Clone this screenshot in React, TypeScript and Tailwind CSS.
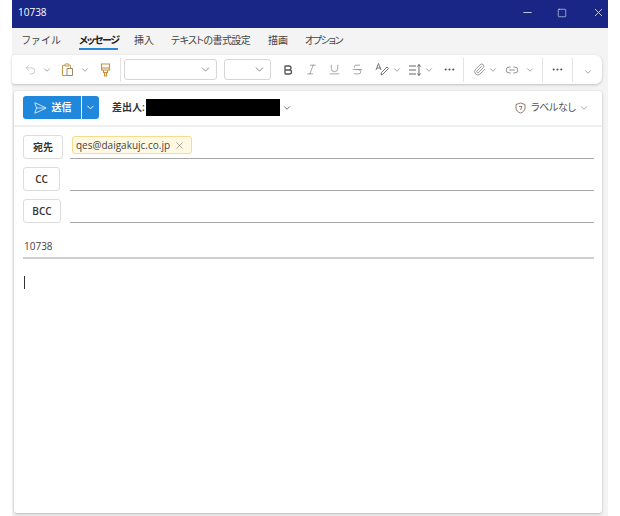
import React from "react";
import { X, Minus, Square, ChevronDown, Undo2, Bold, Italic, Underline, Strikethrough, Paperclip, Link2, SendHorizontal, MoreHorizontal } from "lucide-react";

const FONT = '"Open Sans", "Noto Sans CJK JP", sans-serif';

function Chev({ className = "" }: { className?: string }) {
  return <ChevronDown size={10} strokeWidth={1.5} className={`shrink-0 text-[#707070] ${className}`} />;
}

function Sep({ className = "" }: { className?: string }) {
  return <div className={`h-[24px] w-px shrink-0 bg-[#e3e3e3] ${className}`} />;
}

function Dropdown({ className }: { className: string }) {
  return (
    <div className={`flex h-[21px] shrink-0 items-center justify-end rounded-[3px] border border-[#d6d6d6] bg-white pr-[4px] ${className}`}>
      <ChevronDown size={13} strokeWidth={1.4} className="text-[#666]" />
    </div>
  );
}

function RecipientRow({ label, btnClass, children }: { label: string; btnClass: string; children?: React.ReactNode }) {
  return (
    <div className="mt-[8px] flex h-[24px] items-start">
      <div className={`flex h-[24px] shrink-0 items-center justify-center rounded-[3px] border border-[#dcdcdc] bg-white text-[10px] font-semibold text-[#333] [font-feature-settings:'palt'] ${btnClass}`}>
        {label}
      </div>
      <div className="flex h-[24px] flex-1 items-start border-b border-[#a8a8a8]">{children}</div>
    </div>
  );
}

export default function App() {
  return (
    <div className="h-[516px] w-[620px] overflow-hidden bg-white" style={{ fontFamily: FONT }}>
      <div className="ml-[12px] flex h-[516px] w-[596px] flex-col bg-[#f4f4f4]">
        {/* title bar */}
        <div className="flex h-[28px] shrink-0 items-center bg-[#1a2686] pb-[3px] pl-[6px] text-[10px] text-white">
          <span>10738</span>
          <div className="ml-auto flex items-center text-[#e4e6f4]">
            <Minus size={13} strokeWidth={1.5} className="mr-[23px]" />
            <Square size={10} strokeWidth={1.5} className="mr-[25px]" />
            <X size={13} strokeWidth={1.5} className="mr-[3px]" />
          </div>
        </div>

        {/* tabs */}
        <div className="flex h-[27px] shrink-0 items-center whitespace-nowrap pb-[3px] pl-[10px] text-[10px] text-[#444] [font-feature-settings:'palt']">
          <span className="w-[57px] tracking-[1.4px]">ファイル</span>
          <span className="relative w-[55px] font-semibold tracking-[-1.3px] text-[#222]">
            メッセージ
            <span className="absolute left-0 top-[15px] h-[2px] w-[39px] bg-[#2b88d8]" />
          </span>
          <span className="w-[37px]">挿入</span>
          <span className="w-[97px] tracking-[-0.6px]">テキストの書式設定</span>
          <span className="w-[37px]">描画</span>
          <span className="tracking-[-1.4px]">オプション</span>
        </div>

        {/* toolbar */}
        <div className="flex h-[29px] w-[590px] shrink-0 items-center rounded-r-[7px] rounded-l-[3px] bg-white pl-[12px] shadow-[0_1px_3px_rgba(0,0,0,0.22)]">
          <Undo2 size={13} strokeWidth={1.2} className="shrink-0 text-[#b5b5b5]" />
          <Chev className="ml-[5px]" />
          {/* paste */}
          <svg width="13" height="14" viewBox="0 0 13 14" fill="none" stroke="#c79a4b" strokeWidth="1" className="ml-[9px] shrink-0">
            <path d="M4 2.5 H1.5 V12.5 H6" />
            <path d="M4 1 H8 V3 H4 Z" />
            <path d="M8.5 2.5 H9.5 V5" />
            <path d="M6 5.5 H11.5 V12.5 H6 Z" stroke="#9a8a6a" />
          </svg>
          <Chev className="ml-[6px]" />
          {/* format painter */}
          <svg width="11" height="14" viewBox="0 0 11 14" fill="none" stroke="#c9903a" strokeWidth="1.1" className="ml-[10px] shrink-0">
            <path d="M1.5 1 H9.5 V7 H1.5 Z" />
            <path d="M1.5 5 H9.5" />
            <path d="M3.5 7 V9.5 H7.5 V7" />
            <path d="M4.5 9.5 V13 H6.5 V9.5" />
          </svg>
          <Sep className="ml-[9px]" />
          <Dropdown className="ml-[3px] w-[93px]" />
          <Dropdown className="ml-[7px] w-[47px]" />
          <Bold size={12} strokeWidth={2.6} className="ml-[11px] shrink-0 text-[#555]" />
          <Italic size={13} strokeWidth={1.2} className="ml-[11px] shrink-0 text-[#777]" />
          <Underline size={13} strokeWidth={1.2} className="ml-[10px] shrink-0 text-[#777]" />
          <Strikethrough size={13} strokeWidth={1.2} className="ml-[10px] shrink-0 text-[#777]" />
          <svg width="15" height="15" viewBox="0 0 15 15" fill="none" stroke="#666" strokeWidth="0.9" className="ml-[11px] shrink-0">
            <path d="M1 8 L3.5 1.5 L6 8 M2 6 H5" />
            <path d="M6 13 L6.5 10.5 L12 5 L13.5 6.5 L8 12 Z" />
          </svg>
          <Chev className="ml-[2px]" />
          <svg width="14" height="14" viewBox="0 0 14 14" fill="none" stroke="#666" strokeWidth="1" className="ml-[6px] shrink-0">
            <path d="M1 3 H8 M1 7 H8 M1 11 H8" />
            <path d="M11 1.5 V12.5 M9.5 3.5 L11 1.5 L12.5 3.5 M9.5 10.5 L11 12.5 L12.5 10.5" />
          </svg>
          <Chev className="ml-[2px]" />
          <MoreHorizontal size={13} strokeWidth={2} className="ml-[9px] shrink-0 text-[#555]" />
          <Sep className="ml-[7px]" />
          <Paperclip size={13} strokeWidth={1.2} className="ml-[9px] shrink-0 text-[#666]" />
          <Chev className="ml-[2px]" />
          <Link2 size={14} strokeWidth={1.2} className="ml-[7px] shrink-0 text-[#666]" />
          <Chev className="ml-[6px]" />
          <Sep className="ml-[7px]" />
          <MoreHorizontal size={13} strokeWidth={2} className="ml-[8px] shrink-0 text-[#555]" />
          <Sep className="ml-[8px]" />
          <Chev className="ml-[10px] mt-[5px]" />
        </div>

        {/* compose card */}
        <div className="mb-[3px] ml-[2px] mt-[7px] flex w-[588px] flex-1 flex-col rounded-[3px] bg-white shadow-[0_1px_3px_rgba(0,0,0,0.25)]">
          <div className="flex h-[36px] shrink-0 items-center whitespace-nowrap border-b-2 border-[#efefef] pb-px pl-[9px] [font-feature-settings:'palt']">
            <div className="flex h-[23px] w-[58px] items-center justify-center gap-[5px] rounded-l-[3px] bg-[#2088dc] text-[10px] font-semibold text-white">
              <SendHorizontal size={14} strokeWidth={1.3} />
              <span>送信</span>
            </div>
            <div className="ml-px flex h-[23px] w-[17px] items-center justify-center rounded-r-[3px] bg-[#2088dc]">
              <ChevronDown size={11} strokeWidth={2} className="text-white" />
            </div>
            <span className="ml-[13px] w-[34px] text-[10px] font-semibold text-[#333]">差出人:</span>
            <div className="h-[17px] w-[134px] bg-black" />
            <ChevronDown size={10} strokeWidth={1.8} className="ml-[2px] shrink-0 text-[#444]" />
            <svg width="11" height="12" viewBox="0 0 11 12" fill="none" stroke="#8a6a5e" strokeWidth="0.9" className="ml-[223px] shrink-0">
              <path d="M5.5 1 L10 2.5 V6 C10 8.5 8 10.2 5.5 11 C3 10.2 1 8.5 1 6 V2.5 Z" />
              <path d="M4 4.5 H7 L5.5 8" />
            </svg>
            <span className="ml-[5px] w-[46px] text-[10px] tracking-[-0.4px] text-[#555]">ラベルなし</span>
            <Chev className="ml-[2px]" />
          </div>

          <div className="flex flex-1 flex-col pl-[9px] pr-[8px]">
            <RecipientRow label="宛先" btnClass="w-[40px] mr-[7px]">
              <div className="ml-[2px] mt-px flex h-[18px] w-[120px] items-center rounded-[3px] border border-[#f5dc8f] bg-[#fff8e3] pl-[3px] text-[10px] text-[#444]">
                <span>qes@daigakujc.co.jp</span>
                <X size={11} strokeWidth={1.2} className="ml-auto mr-[6px] text-[#666]" />
              </div>
            </RecipientRow>
            <RecipientRow label="CC" btnClass="w-[37px] mr-[10px]" />
            <RecipientRow label="BCC" btnClass="w-[38px] mr-[9px]" />
            <div className="mt-[15px] flex h-[21px] items-start border-b-2 border-[#cfcfcf] pl-px pt-px text-[10px] text-[#444]">10738</div>
            <div className="ml-px mt-[17px] h-[13px] w-px bg-[#333]" />
          </div>
        </div>
      </div>
    </div>
  );
}
